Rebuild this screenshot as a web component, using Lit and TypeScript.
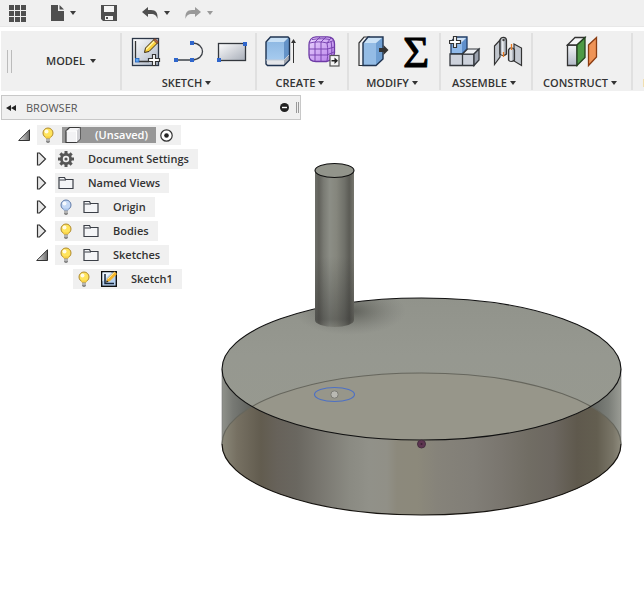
import { LitElement, html, css, svg, nothing, type TemplateResult } from "lit";
import { customElement, property, state } from "lit/decorators.js";
import { classMap } from "lit/directives/class-map.js";

const resetButton = css`
  :host, * { box-sizing: border-box; }
  svg { display: block; flex: none; }
  button {
    display: flex;
    align-items: center;
    margin: 0;
    padding: 0;
    border: 0;
    background: none;
    color: inherit;
    font: inherit;
    cursor: default;
  }
`;

const icon = (w: number, h: number, body: unknown) =>
  html`<svg width=${w} height=${h} viewBox="0 0 ${w} ${h}" aria-hidden="true">${body}</svg>`;

const caret = html`<svg width="6" height="4" viewBox="0 0 6 4" aria-hidden="true"><path d="M0 0h6L3 4z" fill="currentColor"/></svg>`;

/* ---------- quick access bar ---------- */

const gridIcon = icon(17, 17, [0, 6, 12].map(y => [0, 6, 12].map(x => svg`<rect x=${x} y=${y} width="5" height="5" fill="#4f4f4f"/>`)));
const fileIcon = icon(13, 16, svg`<path d="M0 0h7v6h6v10H0z" fill="#4f4f4f"/><path d="M8.500 0 13 4.500H8.500z" fill="#4f4f4f"/>`);
const saveIcon = icon(16, 16, svg`<path d="M0 0h16v16H2L0 14z" fill="#4f4f4f"/><rect x="3" y="1" width="10" height="6" fill="#f5f5f5"/><rect x="4" y="11" width="8" height="4" fill="#f5f5f5"/><rect x="5" y="12" width="2" height="2" fill="#4f4f4f"/>`);
const undoIcon = icon(16, 12, svg`<path d="M0 5 6 0v3h3c5 0 7 3 6.500 9C14.500 8.500 13 7 9 7H6v3z" fill="#4f4f4f"/>`);
const redoIcon = icon(16, 12, svg`<path d="M16 5 10 0v3H7C2 3 0 6 .500 12 1.500 8.500 3 7 7 7h3v3z" fill="#999"/>`);

@customElement("quick-bar")
export class QuickBar extends LitElement {
  static styles = [resetButton, css`
    :host {
      display: flex;
      align-items: center;
      gap: 25px;
      height: 27px;
      padding: 0 9px;
      background: #f0f0f0;
      border-bottom: 1px solid #e8e8e8;
      color: #3c3c3c;
    }
    .history { display: flex; gap: 15px; }
    .menu { gap: 6px; }
    .off { color: #999; }
  `];

  render() {
    return html`
      <button aria-label="Data panel">${gridIcon}</button>
      <button class="menu" aria-label="File">${fileIcon}${caret}</button>
      <button aria-label="Save">${saveIcon}</button>
      <div class="history">
        <button class="menu" aria-label="Undo">${undoIcon}${caret}</button>
        <button class="menu off" aria-label="Redo">${redoIcon}${caret}</button>
      </div>`;
  }
}

/* ---------- ribbon ---------- */

const tool = (body: unknown) => icon(32, 32, body);
const handle = (x: number, y: number) => svg`<rect x=${x - 2} y=${y - 2} width="4" height="4" fill="#2f66cc"/>`;
const plus = (x: number, y: number) =>
  svg`<path transform="translate(${x} ${y})" d="M-1.500-5.500h3v4h4v3h-4v4h-3v-4h-4v-3h4z" fill="#fff" stroke="#333" stroke-width="1.200"/>`;

const createSketch = tool(svg`
  <defs><linearGradient id="a" x2="1" y2="1"><stop offset="0" stop-color="#fff"/><stop offset="1" stop-color="#a9b3c4"/></linearGradient></defs>
  <rect x="2.500" y="2.500" width="26" height="27" fill="url(#a)" stroke="#2b3647" stroke-width="1.300"/>
  <path d="M5.500 5v17M9 25.500h10" stroke="#333" stroke-width="1.300"/>
  <rect x="5.500" y="22.500" width="3.500" height="3.500" fill="#62aaf5" stroke="#1b5cb8" stroke-width=".8"/>
  <path d="M14.500 16.500l1-4.500L24.500 3l3.500 3.500-9 9z" fill="#fbd13c" stroke="#3a2a10"/>
  <path d="M16 13.500l9-9" stroke="#fff6b0" stroke-width="1.300"/>
  <path d="M23.500 4l1.500-1.500 3.500 3.500-1.500 1.500z" fill="#b96a4a" stroke="#5b3324" stroke-width=".8"/>
  ${plus(24, 24)}`);
const lineTool = tool(svg`
  <path d="M3 24h16C33 24 33 7 19 7" fill="none" stroke="#3d4148" stroke-width="1.300"/>
  ${handle(3, 24)}${handle(19, 24)}${handle(19, 7)}`);
const rectTool = tool(svg`
  <defs><linearGradient id="b" x2="1" y2="1"><stop offset="0" stop-color="#fdfdfe"/><stop offset="1" stop-color="#a7adb8"/></linearGradient></defs>
  <rect x="2.500" y="7.500" width="27" height="17" fill="url(#b)" stroke="#33373d" stroke-width="1.300"/>
  ${handle(29, 8)}${handle(3, 24)}`);
const extrude = tool(svg`
  <defs><linearGradient id="c" x2="0" y2="1"><stop offset="0" stop-color="#8fb9e3"/><stop offset="1" stop-color="#a6cbef"/></linearGradient></defs>
  <path d="M1 24h18v5.500H2L1 28.500z" fill="#e4e6ea"/><path d="M19 24l5-5v5l-5 5.500z" fill="#a4a8b0"/>
  <path d="M1 6h18v18H1z" fill="url(#c)"/>
  <path d="M1 6l4.500-5H24l-5 5z" fill="#c8e0f5"/><path d="M19 6l5-5v18l-5 5z" fill="#6493c8"/>
  <path d="M5.500 1H23l1.500 1.500V24L19 29.500H2.500L1 28V6z" fill="none" stroke="#1f3350" stroke-width="1.400"/>
  <path d="M1 24h18l5-5" fill="none" stroke="#c2cbd6"/>
  <path d="M28.500 6v21" stroke="#333"/><path d="M26 7l2.500-4L31 7z" fill="#333"/>`);
const createForm = tool(svg`
  <defs><linearGradient id="d" x2="1" y2="1"><stop offset="0" stop-color="#ead5ff"/><stop offset="1" stop-color="#b57ce8"/></linearGradient></defs>
  <path d="M8 .8h11.500C25 1 26.500 4 26.500 8v9c0 3-4 8.500-8 8.500H8c-5 0-7-2-7-6.500V9C1 4.500 3.500 1 8 .8z" fill="url(#d)" stroke="#6d3aa5" stroke-width="1.300"/>
  <path d="M2 7c5-1.500 12-1.500 17 0 3-1 6-2 7-3M1 13h18.500l7-2M1 19h18l7-3M4 3.500c6-1 13-1 18 0M7 6v19M13 6v19.500M19 7c1 6 1 12 0 18M23 5c1 5 1 11 .500 17M7 6l5-5M13 6l5-5M19 7l4-5" fill="none" stroke="#7a45b2"/>
  <rect x="22" y="19.500" width="9" height="10.500" fill="#f6f6f6" stroke="#555" stroke-width="1.200"/>
  <path d="M23.500 24h3v-2.500l3.500 3.300-3.500 3.200v-2.500h-3z" fill="#222"/>`);
const pressPull = tool(svg`
  <path d="M2 7l5-6h5L7 7v22.500H2z" fill="#f2f3f5" stroke="#333" stroke-width="1.200"/>
  <path d="M6 7h13v22.500H6z" fill="#94bce5"/><path d="M6 7l5-6h15l-7 6z" fill="#cbe2f6"/><path d="M19 7l7-6v22l-7 6.500z" fill="#6f9fd2"/>
  <path d="M11 1h15v22l-7 6.500H6V7z" fill="none" stroke="#1f3350" stroke-width="1.400"/>
  <path d="M22 12h4.500V9l5 5-5 5v-3H22z" fill="#333"/>`);
const parameters = html`<span class="sigma">Σ</span>`;
const newComponent = tool(svg`
  <path d="M2 6h11v12H2z" fill="#8fb9ea"/><path d="M2 6l5-5h11l-5 5z" fill="#cfe2f7"/><path d="M13 6l5-5v12l-5 5z" fill="#5f8fcb"/>
  <path d="M6 1h12v12l-5 5H2V6z" fill="none" stroke="#1f3c66" stroke-width="1.300"/>
  <path d="M1 18h12.500v11.500H1zM13.500 18H25v11.500H13.500z" fill="#cdd2dc" stroke="#33373d" stroke-width="1.300"/>
  <path d="M13.500 18l5-5H30l-5 5z" fill="#eef0f4" stroke="#33373d" stroke-width="1.200"/><path d="M25 18l5-5v11l-5 5.500z" fill="#9aa1ae" stroke="#33373d" stroke-width="1.300"/>
  ${plus(6, 6)}`);
const joint = tool(svg`
  <defs><linearGradient id="e"><stop offset="0" stop-color="#8c939e"/><stop offset=".4" stop-color="#edf0f3"/><stop offset="1" stop-color="#777e89"/></linearGradient></defs>
  <path d="M2.500 10 8 4v17l-5.500 7.500z" fill="#c0c5cc" stroke="#333" stroke-width="1.200"/>
  <path d="M8 4c1-3.500 6-3.500 6.500 0v14c-2 2-5 2-6.500 0z" fill="url(#e)" stroke="#333" stroke-width="1.200"/><circle cx="11.500" cy="4" r="1.200" fill="#444"/>
  <path d="M22 8l7.500 4v17.500L22 25z" fill="#c4c9d1" stroke="#333" stroke-width="1.200"/>
  <path d="M16.500 14c1-3 5-3 6 0v10c-2 2-5 2-6 0z" fill="url(#e)" stroke="#333" stroke-width="1.200"/>
  <path d="M11.500 16v5M19.500 8v6" stroke="#e8781f" stroke-width="1.300"/>`);
const offsetPlane = tool(svg`
  <defs><linearGradient id="f" x2="0" y2="1"><stop offset="0" stop-color="#f2f4f6"/><stop offset="1" stop-color="#b3bac8"/></linearGradient></defs>
  <path d="M1.500 9H11v20.500H1.500z" fill="url(#f)" stroke="#333" stroke-width="1.300"/>
  <path d="M1.500 9 9 1.500h10L11 9z" fill="#f4f5f7" stroke="#333" stroke-width="1.300"/>
  <path d="M11 9l8-7.500v20l-8 8z" fill="#4e9a46" stroke="#23421f" stroke-width="1.300"/>
  <path d="M22.500 9l8-7.500v19.500l-8 8.500z" fill="#ef9457" stroke="#8a3c12" stroke-width="1.300"/>`);

interface Tool { name: string; glyph: TemplateResult; }
interface Group { label: string; tools: Tool[]; }

const groups: Group[] = [
  { label: "SKETCH", tools: [{ name: "Create sketch", glyph: createSketch }, { name: "Line", glyph: lineTool }, { name: "Rectangle", glyph: rectTool }] },
  { label: "CREATE", tools: [{ name: "Extrude", glyph: extrude }, { name: "Create form", glyph: createForm }] },
  { label: "MODIFY", tools: [{ name: "Press pull", glyph: pressPull }, { name: "Change parameters", glyph: parameters }] },
  { label: "ASSEMBLE", tools: [{ name: "New component", glyph: newComponent }, { name: "Joint", glyph: joint }] },
  { label: "CONSTRUCT", tools: [{ name: "Offset plane", glyph: offsetPlane }] },
  { label: "INSPECT", tools: [] },
];

@customElement("tool-ribbon")
export class ToolRibbon extends LitElement {
  static styles = [resetButton, css`
    :host {
      display: flex;
      height: 60px;
      margin: 4px 0 0 1px;
      overflow: hidden;
      background: #f0f0f0;
      color: #333;
      font-weight: 600;
      line-height: 14px;
    }
    .workspace {
      display: flex;
      flex: none;
      align-items: center;
      width: 119px;
      padding-left: 6px;
      gap: 34px;
    }
    .grip { width: 5px; height: 23px; border: solid #bbb; border-width: 0 1px; }
    .label { gap: 5px; white-space: nowrap; }
    .group {
      display: flex;
      flex: none;
      flex-direction: column;
      align-items: center;
      justify-content: space-between;
      height: 57px;
      margin-top: 2px;
      padding: 3px 7px 0 8px;
      border-left: 2px solid #e0e0e0;
    }
    .group .label { gap: 3px; padding: 0 7px 0 2px; }
    .tools { display: flex; gap: 11px; height: 32px; }
    .sigma {
      width: 32px;
      color: #000;
      font: 400 45px/32px "Liberation Serif", serif;
      text-align: center;
      -webkit-text-stroke: 1px #000;
    }
  `];

  render() {
    return html`
      <div class="workspace">
        <span class="grip"></span>
        <button class="label">MODEL${caret}</button>
      </div>
      ${groups.map(g => html`
        <div class="group" role="group" aria-label=${g.label}>
          <div class="tools">${g.tools.map(t => html`<button aria-label=${t.name}>${t.glyph}</button>`)}</div>
          <button class="label">${g.label}${caret}</button>
        </div>`)}`;
  }
}

/* ---------- browser tree ---------- */

const bulb = (lit: boolean) => icon(16, 16, svg`
  <circle cx="8" cy="6" r="5" fill=${lit ? "#ffe45c" : "#c4d8f5"} stroke=${lit ? "#b08a2c" : "#5f7aa8"}/>
  <path d="M5 9.500h6L10 12H6z" fill=${lit ? "#f7cf45" : "#a9c3ea"}/>
  <circle cx="6.500" cy="4.500" r="2" fill="#fff" opacity=".85"/>
  <path d="M6 11.500h4v3L9 16H7l-1-1.500z" fill="#8b8b8b"/><path d="M6 13h4" stroke="#ddd"/>`);
const folder = icon(16, 16, svg`<path d="M1 13.500v-11h5.500l1 2H15v9z" fill="#f4f5f7" stroke="#3b3f47" stroke-width="1.200"/><path d="M1.500 5H8" stroke="#3b3f47"/>`);
const gear = icon(16, 16, svg`
  ${[0, 45, 90, 135].map(a => svg`<rect x="6.500" y="0" width="3" height="16" fill="#555" transform="rotate(${a} 8 8)"/>`)}
  <circle cx="8" cy="8" r="6" fill="#555"/><circle cx="8" cy="8" r="3.200" fill="#f0f0f0"/><circle cx="8" cy="8" r="1.600" fill="#555"/>`);
const cube = icon(16, 16, svg`<path d="M1 4l3.500-3.500H15V12l-3.500 3.500H1z" fill="#f2f2f4" stroke="#3a3a3a" stroke-width="1.200"/><path d="M11.500 4 15 .5V12l-3.500 3.500z" fill="#d0d0d4"/><path d="M1.500 4h10V15" fill="none" stroke="#fff"/>`);
const sketch = icon(16, 16, svg`
  <rect x=".7" y=".7" width="14.600" height="14.600" fill="#b6d0ee" stroke="#111" stroke-width="1.400"/>
  <path d="M1.500 1.500h9l-9 9z" fill="#eef5fc"/>
  <path d="M4 3v9.500h9" fill="none" stroke="#16263c" stroke-width="1.500"/>
  <path d="M5 11.500l1.500-4 7-7L16 3l-7 7z" fill="#f5b429"/><path d="M5 11.500l.8-2.300L7.500 11z" fill="#222"/><path d="M7 8l6.500-6.500" stroke="#ffe58a"/>`);
const active = icon(13, 13, svg`<circle cx="6.500" cy="6.500" r="5.700" fill="#fff" stroke="#333" stroke-width="1.200"/><circle cx="6.500" cy="6.500" r="2.300" fill="#222"/>`);
const opened = icon(12, 12, svg`<defs><linearGradient id="g"><stop offset="0" stop-color="#eee"/><stop offset="1" stop-color="#666"/></linearGradient></defs><path d="M11.500.700V11.500H.700z" fill="url(#g)" stroke="#333"/>`);
const closed = icon(12, 14, svg`<path d="M1.500 1h2L9.500 7l-6 6h-2z" fill="#e8e8e8" stroke="#333" stroke-width="1.200"/>`);

interface Node {
  name: string;
  glyph: TemplateResult;
  light?: boolean;
  open?: boolean;
  leaf?: boolean;
  root?: boolean;
  children?: Node[];
}

const documentTree: Node = {
  name: "(Unsaved)", glyph: cube, light: true, open: true, root: true,
  children: [
    { name: "Document Settings", glyph: gear },
    { name: "Named Views", glyph: folder },
    { name: "Origin", glyph: folder, light: false },
    { name: "Bodies", glyph: folder, light: true },
    { name: "Sketches", glyph: folder, light: true, open: true, children: [{ name: "Sketch1", glyph: sketch, light: true, leaf: true }] },
  ],
};

@customElement("tree-node")
export class TreeNode extends LitElement {
  @property({ attribute: false }) node!: Node;
  @state() private folded = false;

  static styles = [resetButton, css`
    :host { display: block; }
    .row { display: flex; align-items: center; height: 20px; margin-bottom: 4px; }
    .toggle { justify-content: center; width: 20px; height: 20px; padding-right: 7px; }
    .spacer { width: 20px; }
    .item { display: flex; align-items: center; height: 20px; padding-left: 3px; background: #f0f0f0; }
    .light { margin-right: 9px; }
    .name { gap: 14px; height: 16px; padding-right: 9px; white-space: nowrap; }
    .root { padding-right: 8px; }
    .root .light { margin-right: 6px; }
    .root .name { padding: 0 8px 0 3px; margin-right: 4px; background: #979797; color: #fff; }
    .children { padding-left: 18px; }
  `];

  render() {
    const n = this.node;
    const open = !!n.open && !this.folded;
    return html`
      <div class="row">
        ${n.leaf ? html`<span class="spacer"></span>` : html`
          <button class="toggle" aria-label="Expand ${n.name}" aria-expanded=${open}
            @click=${() => { this.folded = !this.folded; }}>${open ? opened : closed}</button>`}
        <div class=${classMap({ item: true, root: !!n.root })}>
          ${n.light === undefined ? nothing : html`<button class="light" aria-label="Show ${n.name}">${bulb(n.light)}</button>`}
          <button class="name">${n.glyph}${n.name}</button>
          ${n.root ? html`<button aria-label="Activate">${active}</button>` : nothing}
        </div>
      </div>
      ${open && n.children ? html`<div class="children">${n.children.map(c => html`<tree-node .node=${c}></tree-node>`)}</div>` : nothing}`;
  }
}

@customElement("browser-panel")
export class BrowserPanel extends LitElement {
  static styles = [resetButton, css`
    :host { display: block; width: 300px; margin: 4px 0 0 1px; color: #333; }
    .head {
      display: flex;
      align-items: center;
      height: 25px;
      padding: 0 1px 0 4px;
      border: 1px solid #c8c8c8;
      background: #f0f0f0;
    }
    .title { flex: 1; margin: 0 0 0 10px; color: #555; font-size: 11px; font-weight: 500; }
    .grip { width: 3px; height: 11px; margin-left: 7px; border: solid #999; border-width: 0 1px; }
    .tree { padding: 5px 0 0 16px; font-weight: 600; }
  `];

  render() {
    return html`
      <div class="head">
        <button aria-label="Collapse panel">${icon(10, 6, svg`<path d="M5 0v6L0 3zM10 0v6L5 3z" fill="#222"/>`)}</button>
        <h2 class="title">BROWSER</h2>
        <button aria-label="Hide panel">${icon(9, 9, svg`<circle cx="4.500" cy="4.500" r="4.500" fill="#222"/><path d="M2 4.500h5" stroke="#fff" stroke-width="1.400"/>`)}</button>
        <span class="grip"></span>
      </div>
      <div class="tree"><tree-node .node=${documentTree}></tree-node></div>`;
  }
}

/* ---------- 3D model ---------- */

const stops = (list: [number, string][]) => list.map(([o, c]) => svg`<stop offset=${o} stop-color=${c}/>`);

@customElement("model-view")
export class ModelView extends LitElement {
  static styles = css`
    :host { display: block; }
    .scene { display: block; width: 100%; height: 100%; }
  `;

  render() {
    return html`
      <svg class="scene" viewBox="0 91 644 503" preserveAspectRatio="xMidYMin meet" role="img" aria-label="Disc with an upright pin">
        <defs>
          <linearGradient id="wall" gradientUnits="userSpaceOnUse" x1="221" x2="621">${stops([
            [0, "#8c8a7b"], [.04, "#767062"], [.1, "#625c4f"], [.14, "#67625a"], [.19, "#6a6760"], [.25, "#797770"],
            [.32, "#8a8a82"], [.37, "#919189"], [.415, "#919087"], [.44, "#8c897c"], [.49, "#8c897b"], [.54, "#86837a"], [.63, "#817e77"],
            [.7, "#7a766f"], [.77, "#716d64"], [.83, "#6c6760"], [.89, "#5f594d"], [.94, "#635e50"], [.98, "#7a7668"], [1, "#8f8c7e"]])}
          </linearGradient>
          <linearGradient id="rim" gradientUnits="userSpaceOnUse" x1="221" x2="621">${stops([
            [0, "#92948d"], [.03, "#777974"], [.08, "#5d5f5b"], [.92, "#5f625e"], [.97, "#7c7f79"], [1, "#9a9c95"]])}
          </linearGradient>
          <linearGradient id="face" x1="0" y1="0" x2="0" y2="1">${stops([[0, "#91938b"], [.4, "#969890"], [1, "#97998f"]])}</linearGradient>
          <linearGradient id="pin">${stops([
            [0, "#6d6e68"], [.1, "#62625c"], [.22, "#797a73"], [.38, "#8c8e86"], [.55, "#85867d"], [.75, "#70716a"], [.88, "#5c5c56"], [1, "#77776f"]])}
          </linearGradient>
          <linearGradient id="pinshade" x2="0" y2="1"><stop offset=".55" stop-color="#222" stop-opacity="0"/><stop offset=".95" stop-color="#222" stop-opacity=".34"/><stop offset="1" stop-color="#222" stop-opacity=".15"/></linearGradient>
          <radialGradient id="shadow"><stop offset="0" stop-color="#3b3c37" stop-opacity=".6"/><stop offset=".5" stop-color="#4b4c47" stop-opacity=".28"/><stop offset="1" stop-color="#666" stop-opacity="0"/></radialGradient>
          <clipPath id="top"><ellipse cx="421.500" cy="369" rx="199.500" ry="71"/></clipPath>
        </defs>
        <path d="M222 369V444A199.500 71 0 0 0 621 444V369z" fill="url(#rim)"/>
        <ellipse cx="421.500" cy="444" rx="199.500" ry="71" fill="url(#wall)"/>
        <ellipse cx="421.500" cy="369" rx="199.500" ry="71" fill="url(#face)"/>
        <g clip-path="url(#top)">
          <ellipse cx="421.500" cy="444" rx="199.500" ry="71" fill="#97968a"/>
          <ellipse cx="350" cy="311" rx="56" ry="24" fill="url(#shadow)"/>
        </g>
        <path d="M222 369V444M621 369V444" stroke="#777" stroke-width=".6"/>
        <path d="M222 444A199.500 71 0 0 1 621 444" fill="none" stroke="#66665d" stroke-width="1.200"/>
        <path d="M222 444A199.500 71 0 0 0 621 444" fill="none" stroke="#16130f" stroke-width="1.200"/>
        <ellipse cx="421.500" cy="369" rx="199.500" ry="71" fill="none" stroke="#111" stroke-width="1.100"/>
        <path d="M315 170V320A19.500 7 0 0 0 354 320V170z" fill="url(#pin)"/>
        <path d="M315 170V320A19.500 7 0 0 0 354 320V170z" fill="url(#pinshade)"/>
        <ellipse cx="334.500" cy="170.500" rx="19.500" ry="7" fill="#92948b" stroke="#111" stroke-width="1.100"/>
        <ellipse cx="334.500" cy="394.500" rx="20" ry="7" fill="none" stroke="#4d70c4" stroke-width="1.200"/>
        <circle cx="334.500" cy="394.500" r="3.700" fill="#b9b9b3" stroke="#7c7c76"/>
        <circle cx="421.500" cy="444" r="4" fill="#5e3551" stroke="#453040"/>
        <circle cx="421.500" cy="444" r="1" fill="#3a2033"/>
      </svg>`;
  }
}

@customElement("app-root")
export class AppRoot extends LitElement {
  static styles = css`
    :host {
      display: flex;
      flex-direction: column;
      min-height: 100vh;
      background: #fff;
      font: 11px/16px "Open Sans", "Noto Sans", sans-serif;
    }
    .workspace { display: grid; flex: 1; }
    .view, .panel { grid-area: 1 / 1; min-width: 0; }
    .panel { place-self: start; }
  `;

  render() {
    return html`
      <quick-bar></quick-bar>
      <tool-ribbon></tool-ribbon>
      <main class="workspace">
        <model-view class="view"></model-view>
        <browser-panel class="panel"></browser-panel>
      </main>`;
  }
}
